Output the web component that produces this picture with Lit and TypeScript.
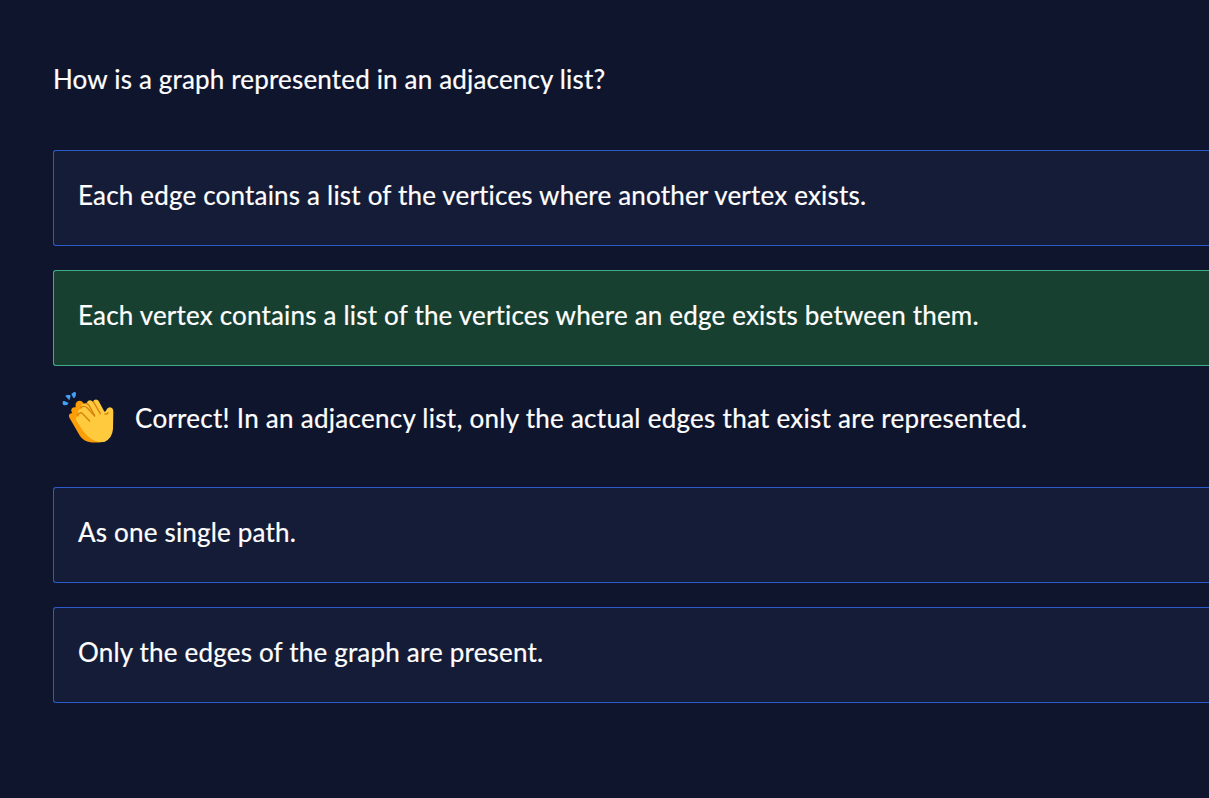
import { LitElement, html, css } from "lit";
import { customElement, property } from "lit/decorators.js";

@customElement("clap-icon")
class ClapIcon extends LitElement {
  static styles = css`
    :host { display: block; width: 52px; height: 54px; }
    svg { display: block; width: 52px; height: 54px; }
  `;
  render() {
    return html`<svg viewBox="36 30 156 162" aria-hidden="true">
      <g fill="#42a0f5">
        <path d="M38 66Q39 62 43 63L56 69L51 75L42 76Q38 75 38 70Z" />
        <path d="M46 48Q49 45 52 45L60 45Q63 47 61 52L58 61Z" />
        <path d="M64 42L72 36Q77 35 78 40L77 48L73 54L70 54Z" />
      </g>
      <path fill="#fb9e07" d="M60 116Q54 107 59 102Q62 99 67 100Q61 91 66 85Q70 80 77 82Q74 72 80 66Q88 59 97 65L102 72Q110 66 116 71L158 186Q141 189 121 187Q101 184 90 168Z" />
      <path fill="#ffca3d" d="M80 124Q75 117 79 112Q83 107 89 110L86 104Q81 96 86 90Q91 84 98 88L96 86Q91 78 98 73Q105 68 111 74L113 76Q108 68 114 63Q122 57 130 67L132 70Q127 62 135 59Q142 57 146 63L162 93Q165 98 169 90Q172 83 180 82Q190 83 190 96L189 147Q187 175 163 186Q135 188 116 171Q105 162 98 151Z" />
      <g fill="none" stroke="#d68212" stroke-width="4" stroke-linecap="round" stroke-linejoin="round">
        <path d="M82 105Q91 94 98 101L119 123" />
        <path d="M92 83Q103 75 112 84L134 108" />
        <path d="M107 71Q112 69 117 76L134 107" />
        <path d="M130 65L151 101" />
        <path d="M165 102Q172 104 174 98" />
      </g>
    </svg>`;
  }
}

@customElement("quiz-option")
class QuizOption extends LitElement {
  @property() text = "";
  @property({ type: Boolean, reflect: true }) correct = false;
  static styles = css`
    :host { display: block; box-sizing: border-box; height: 96px; padding: 26px 24px 0; background: #151c38; border: 1px solid #2b5bc8; border-right: 0; border-radius: 3px 0 0 3px; white-space: nowrap; }
    :host([correct]) { background: #184031; border-color: #3fae88; }
  `;
  render() {
    return html`${this.text}`;
  }
}

@customElement("app-root")
class AppRoot extends LitElement {
  static styles = css`
    :host { display: block; box-sizing: border-box; height: 798px; overflow: hidden; padding: 61px 0 0 53px; background: #10152e; color: #fff; font: 26px/36px Lato, sans-serif; letter-spacing: 0.19px; -webkit-text-stroke: 0.2px #fff; }
    .question { margin: 0 0 53px; font-size: 26px; font-weight: 400; letter-spacing: 0.17px; white-space: nowrap; }
    .options { display: flex; flex-direction: column; gap: 24px; }
    .feedback { display: flex; align-items: center; gap: 21px; height: 54px; margin: 24px 0 19px; padding-left: 9px; }
    .feedback p { margin: 0; padding-top: 2px; white-space: nowrap; letter-spacing: 0.27px; }
    .feedback clap-icon { flex: none; }
  `;
  render() {
    return html`
      <h1 class="question">How is a graph represented in an adjacency list?</h1>
      <div class="options">
        <quiz-option text="Each edge contains a list of the vertices where another vertex exists."></quiz-option>
        <div>
          <quiz-option correct text="Each vertex contains a list of the vertices where an edge exists between them."></quiz-option>
          <div class="feedback">
            <clap-icon></clap-icon>
            <p>Correct! In an adjacency list, only the actual edges that exist are represented.</p>
          </div>
        </div>
        <quiz-option text="As one single path."></quiz-option>
        <quiz-option text="Only the edges of the graph are present."></quiz-option>
      </div>
    `;
  }
}
